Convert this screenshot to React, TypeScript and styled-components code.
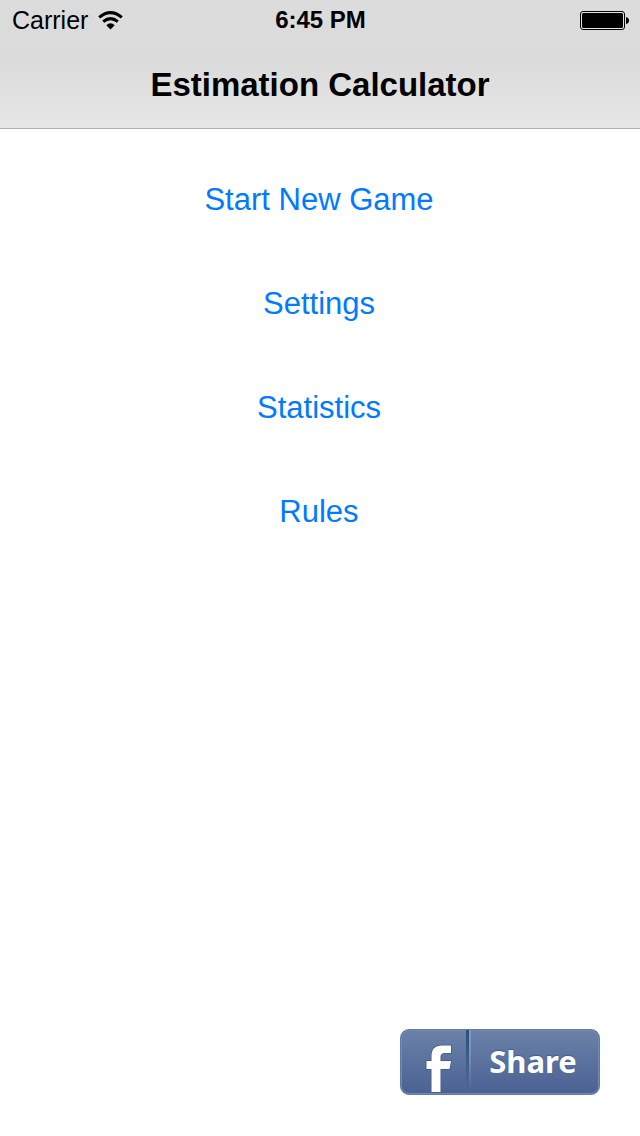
import React from "react";
import styled, { createGlobalStyle } from "styled-components";

const GlobalStyle = createGlobalStyle`
  *, *::before, *::after { box-sizing: border-box; }
  body {
    margin: 0;
    background: #ffffff;
    color: #000000;
    font-family: "Liberation Sans", "Helvetica Neue", Arial, sans-serif;
  }
`;

const Screen = styled.div`
  display: flex;
  flex-direction: column;
  min-height: 100vh;
`;

const Header = styled.header`
  background: linear-gradient(to bottom, #dcdcdc 0, #dbdbdb 50%, #e7e7e7 100%);
  border-bottom: 1px solid #b0b0b0;
`;

const StatusBar = styled.div`
  display: grid;
  grid-template-columns: 1fr auto 1fr;
  align-items: center;
  height: 40px;
  padding: 0 11px 0 12px;
  font-size: 24px;
  line-height: 40px;
`;

const Network = styled.div`
  display: flex;
  align-items: center;
  gap: 10px;
  font-size: 25px;
`;

const Clock = styled.time`
  font-weight: 700;
`;

const BatterySlot = styled.div`
  display: flex;
  justify-content: flex-end;
`;

const TitleBar = styled.div`
  display: flex;
  align-items: center;
  justify-content: center;
  height: 88px;
  padding-top: 2px;
`;

const Title = styled.h1`
  margin: 0;
  font-size: 33px;
  line-height: 40px;
  font-weight: 700;
`;

const Menu = styled.nav`
  display: flex;
  flex-direction: column;
  align-items: center;
  gap: 44px;
  padding: 41px 2px 0 0;
`;

const MenuButton = styled.button`
  height: 60px;
  padding: 0 8px;
  border: 0;
  background: none;
  color: #007aff;
  font-family: inherit;
  font-size: 31px;
  line-height: 60px;
  cursor: pointer;
`;

const Footer = styled.footer`
  display: flex;
  justify-content: flex-end;
  margin-top: auto;
  padding: 40px 40px 41px;
`;

const ShareButton = styled.button`
  display: flex;
  width: 200px;
  height: 66px;
  padding: 0;
  overflow: hidden;
  border: 1px solid #5f7aa6;
  border-radius: 9px;
  background: linear-gradient(to bottom, #6b81a9, #4a6293);
  box-shadow: inset 0 0 0 1px #7389b0;
  color: #ffffff;
  cursor: pointer;
`;

const ShareMark = styled.span`
  display: flex;
  align-items: flex-end;
  width: 65px;
  height: 64px;
  padding: 0 0 1px 24px;
`;

const Divider = styled.span`
  width: 5px;
  height: 64px;
  background: linear-gradient(to right, #2f5483 0 3px, #8299bd 3px 5px);
  mask-image: linear-gradient(to bottom, #000 20%, transparent 96%);
`;

const ShareLabel = styled.span`
  flex: 1;
  padding-right: 4px;
  font-family: "Noto Sans", "Open Sans", sans-serif;
  font-size: 31px;
  line-height: 62px;
  font-weight: 700;
  text-align: center;
  text-shadow: 0 -1px 1px #3f5c8c;
`;

const WifiIcon = () => (
  <svg width="25" height="19" viewBox="0 0 25 19" aria-label="Wi-Fi" role="img">
    <g fill="none" stroke="#000" strokeWidth="3">
      <path d="M1.2 6.4Q12.5-3.2 23.8 6.4" />
      <path d="M5.2 10.6Q12.5 4.6 19.8 10.6" />
    </g>
    <path d="M8.3 14.2Q12.5 10.4 16.7 14.2L12.5 18.6Z" fill="#000" />
  </svg>
);

const BatteryIcon = () => (
  <svg width="49" height="19" viewBox="0 0 49 19" aria-label="Battery full" role="img">
    <rect x="0.5" y="0.5" width="44" height="18" rx="2.5" fill="#e4e4e4" stroke="#000" />
    <rect x="2" y="2" width="41" height="15" rx="1.5" fill="#000" />
    <path d="M46 6Q49 6.5 49 9.5Q49 12.5 46 13Z" fill="#000" />
  </svg>
);

const FacebookMark = () => (
  <svg width="28" height="50" viewBox="0 0 28 50" aria-hidden="true">
    <path
      d="M6.5 49V26H1.5V18H6.5V13Q6.5 2.5 17 2.5H26V10H20Q15.5 10 15.5 13.5V18H26L24.5 26H15.5V49Z"
      fill="#fff"
      stroke="#3f5c8c"
      strokeWidth="1.5"
      paintOrder="stroke"
    />
  </svg>
);

const menuItems = ["Start New Game", "Settings", "Statistics", "Rules"];

export default function App() {
  return (
    <Screen>
      <GlobalStyle />
      <Header>
        <StatusBar>
          <Network>
            <span>Carrier</span>
            <WifiIcon />
          </Network>
          <Clock>6:45 PM</Clock>
          <BatterySlot>
            <BatteryIcon />
          </BatterySlot>
        </StatusBar>
        <TitleBar>
          <Title>Estimation Calculator</Title>
        </TitleBar>
      </Header>
      <Menu aria-label="Main menu">
        {menuItems.map((item) => (
          <MenuButton key={item} type="button">
            {item}
          </MenuButton>
        ))}
      </Menu>
      <Footer>
        <ShareButton type="button">
          <ShareMark>
            <FacebookMark />
          </ShareMark>
          <Divider />
          <ShareLabel>Share</ShareLabel>
        </ShareButton>
      </Footer>
    </Screen>
  );
}
